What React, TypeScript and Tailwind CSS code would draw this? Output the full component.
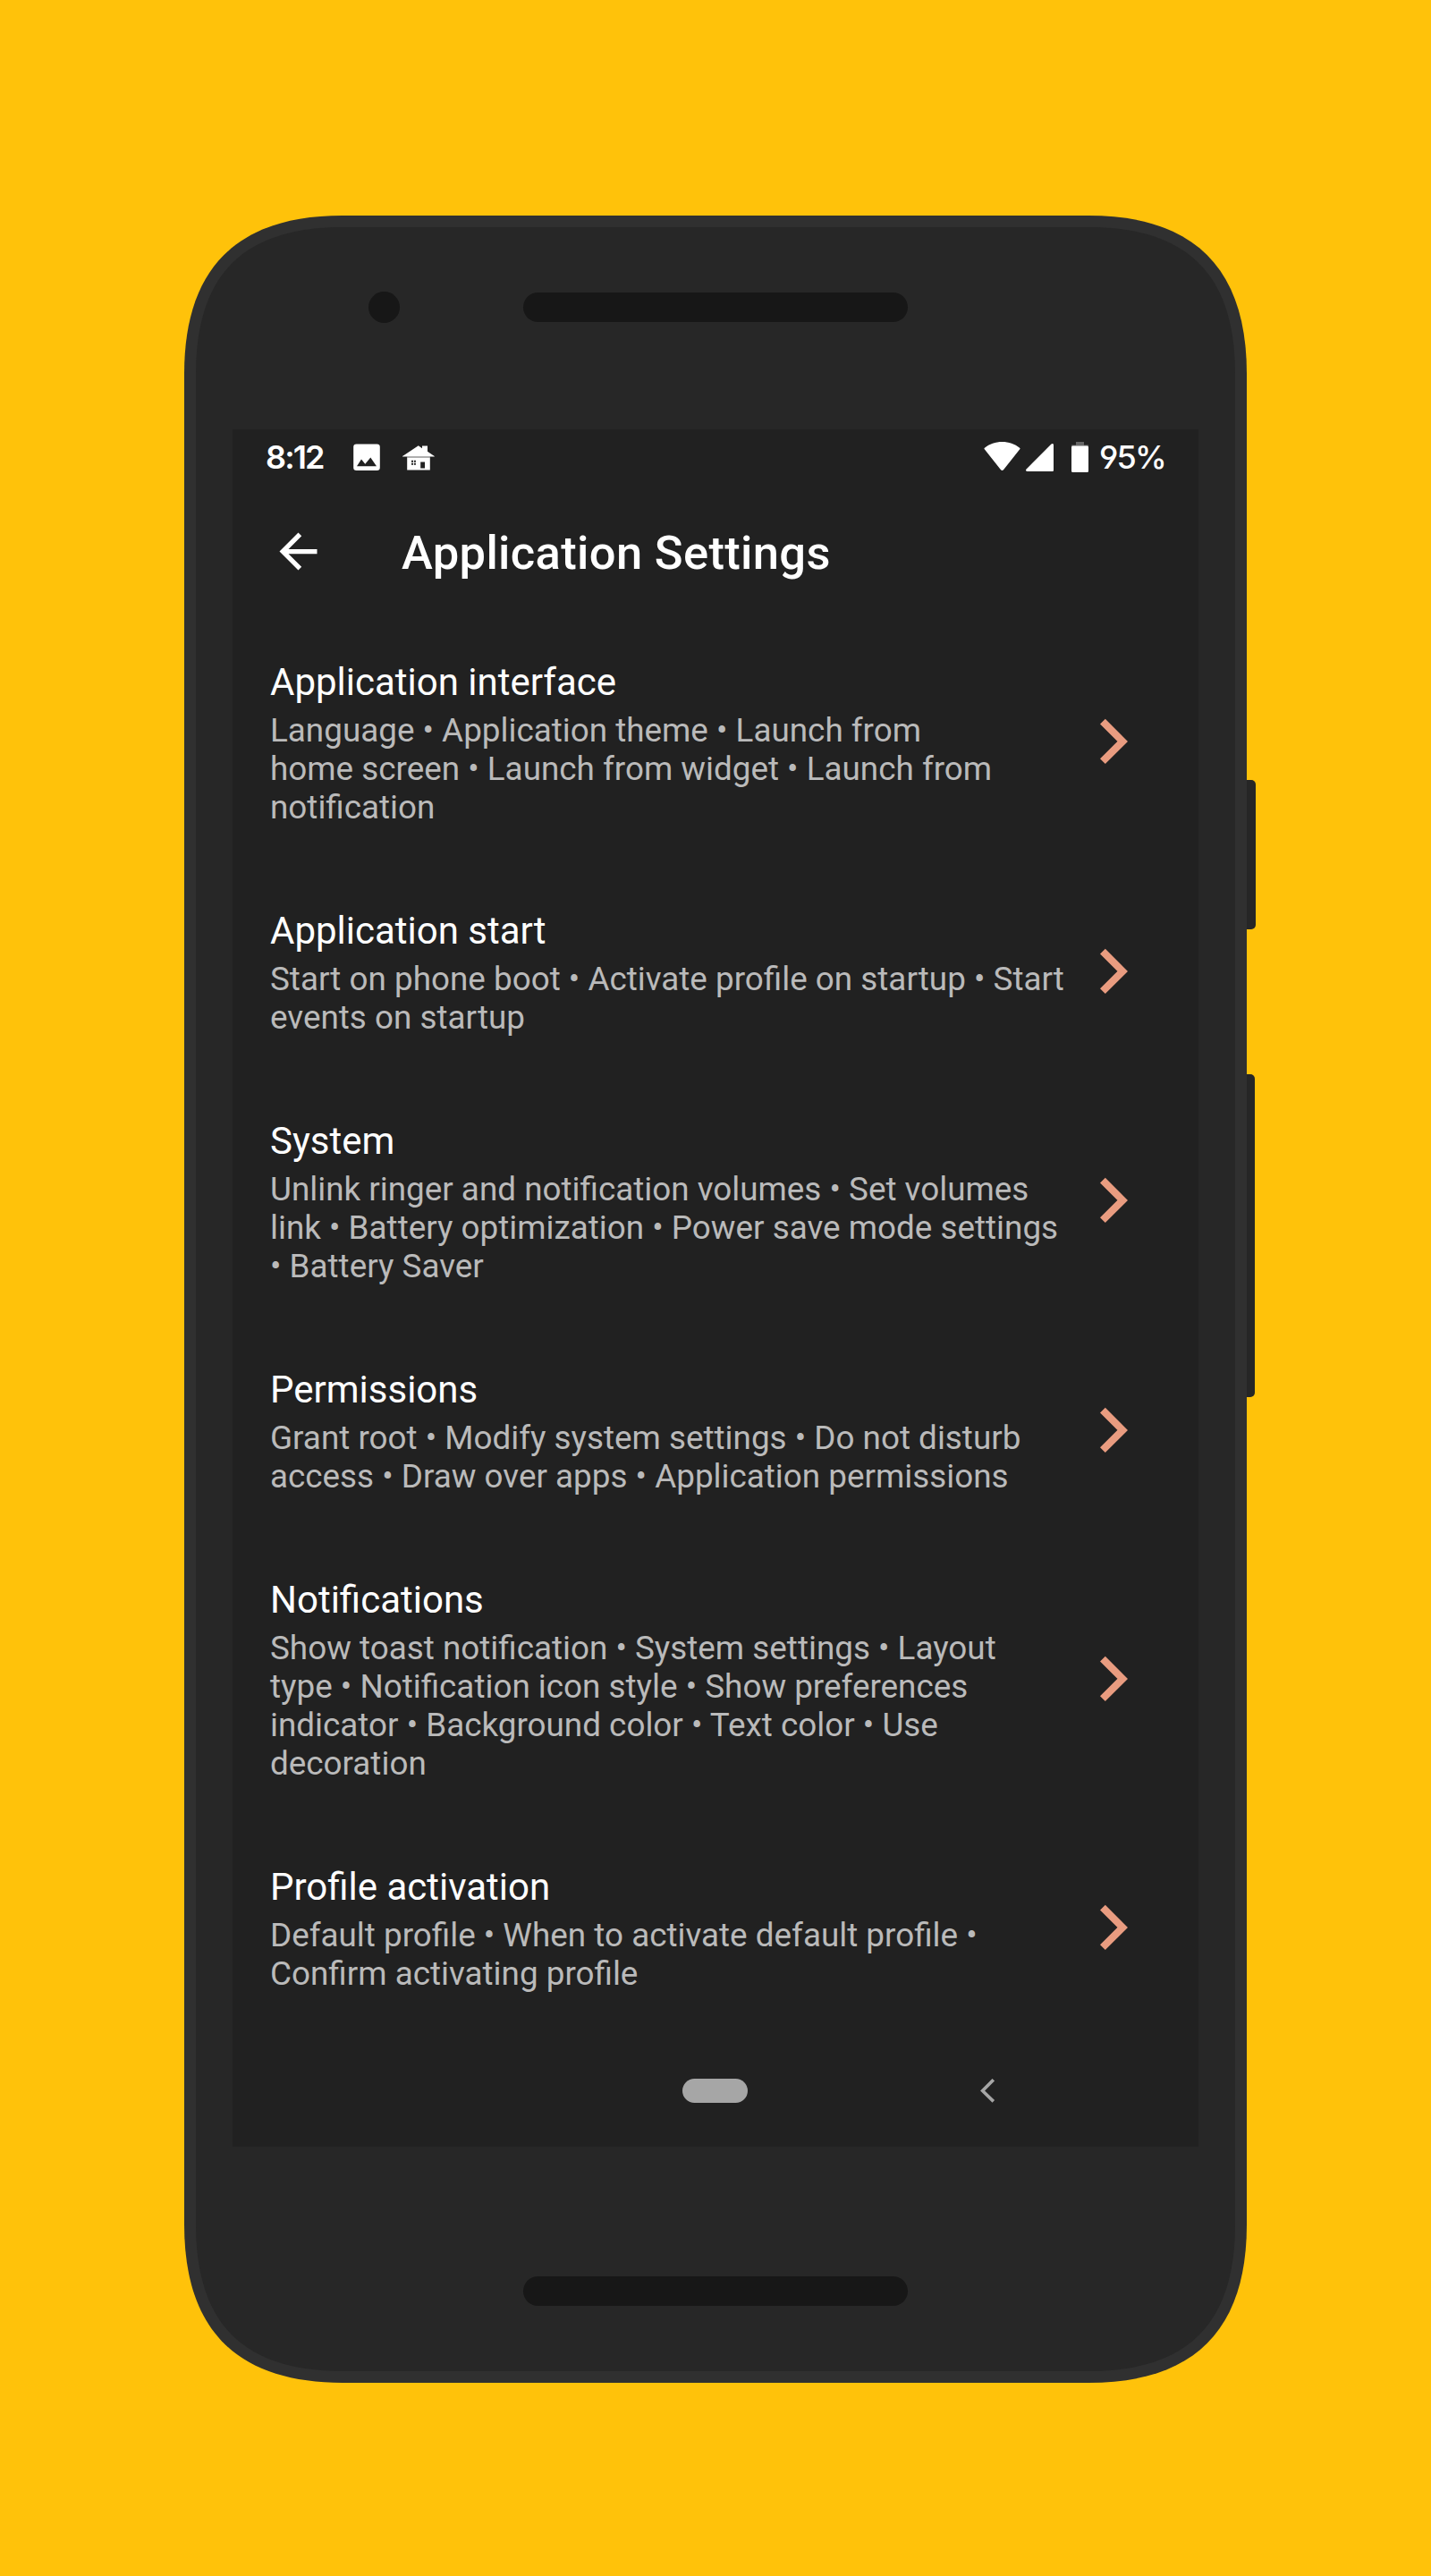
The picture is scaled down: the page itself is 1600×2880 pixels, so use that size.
import React from "react";

type Setting = { title: string; lines: string[] };

const settings: Setting[] = [
  {
    title: "Application interface",
    lines: [
      "Language • Application theme • Launch from",
      "home screen • Launch from widget • Launch from",
      "notification",
    ],
  },
  {
    title: "Application start",
    lines: ["Start on phone boot • Activate profile on startup • Start", "events on startup"],
  },
  {
    title: "System",
    lines: [
      "Unlink ringer and notification volumes • Set volumes",
      "link • Battery optimization • Power save mode settings",
      "• Battery Saver",
    ],
  },
  {
    title: "Permissions",
    lines: [
      "Grant root • Modify system settings • Do not disturb",
      "access • Draw over apps • Application permissions",
    ],
  },
  {
    title: "Notifications",
    lines: [
      "Show toast notification • System settings • Layout",
      "type • Notification icon style • Show preferences",
      "indicator • Background color • Text color • Use",
      "decoration",
    ],
  },
  {
    title: "Profile activation",
    lines: ["Default profile • When to activate default profile •", "Confirm activating profile"],
  },
];

/* Handset body: outer rim, inner face and side keys. */
function PhoneBody() {
  return (
    <svg className="absolute top-0 left-0" width="1200" height="2423" viewBox="0 0 1200 2423">
      <rect x="1170" y="631" width="28" height="167" rx="5" fill="#262626" />
      <rect x="1170" y="960" width="27" height="361" rx="5" fill="#262626" />
      <path
        fill="#303030"
        d="M177 0H1011C1129 0 1188 59 1188 177V2246C1188 2364 1129 2423 1011 2423H177C59 2423 0 2364 0 2246V177C0 59 59 0 177 0Z"
      />
      <path
        fill="#272727"
        d="M177 13H1011C1122 13 1175 66 1175 177V2246C1175 2357 1122 2410 1011 2410H177C66 2410 13 2357 13 2246V177C13 66 66 13 177 13Z"
      />
    </svg>
  );
}

function StatusBar() {
  return (
    <div className="flex h-[66px] items-start pt-[14px] pr-[37px] pl-[37px] text-white">
      <span className="mt-[1px] w-[98px] font-['Inter',sans-serif] text-[36px] leading-[32px] font-semibold tracking-[-1.9px] whitespace-nowrap">
        8:12
      </span>
      <svg className="mt-[2px]" width="30" height="31" viewBox="0 0 30 31">
        <path
          fill="#fff"
          fillRule="evenodd"
          d="M3.5 .5h23a3.3 3.3 0 0 1 3.3 3.3v23a3.3 3.3 0 0 1-3.3 3.3h-23a3.3 3.3 0 0 1-3.3-3.3v-23A3.3 3.3 0 0 1 3.5 .5zM4 25.2H26L19.3 15.6l-6 7.2-4.3-5.2z"
        />
      </svg>
      <svg className="mt-[4px] ml-[25px]" width="36" height="28" viewBox="0 0 36 28">
        <path
          fill="#fff"
          fillRule="evenodd"
          d="M0 12.1L17.8 .3 22 3.2V.6h6v6.2l7.8 5.3v.5H0zM5.2 13.4h25.6v14H5.2zM20.2 18.6v7h4.8v-7z"
        />
        <path fill="#cfcfcf" d="M5.2 12.5h25.6v1H5.2z" />
        <path fill="#222" d="M10 16.8h2v2h-2zM12.9 16.8h2v2h-2zM10 19.7h2v2h-2zM12.9 19.7h2v2h-2z" />
      </svg>
      <div className="ml-auto flex items-start">
        <svg width="41" height="33" viewBox="0 0 41 33">
          <path
            fill="#fff"
            d="M.9 6.7C6.3 2.4 13 0 20.5 0S34.7 2.4 40.1 6.7c.6.5.6 1 .1 1.6L22 31.2c-.9 1.1-2.1 1.1-3 0L.8 8.3C.3 7.7.3 7.2.9 6.7z"
          />
        </svg>
        <svg className="mt-[2px] ml-[6px]" width="31" height="31" viewBox="0 0 31 31">
          <path fill="#fff" d="M28.2 .8C29.6 -.5 31 0 31 1.8V29.8q0 1.2-1.2 1.2H1.6C-.2 31-.5 29.6.8 28.2z" />
        </svg>
        <svg className="ml-[20px]" width="19" height="34" viewBox="0 0 19 34">
          <path fill="#666" d="M5 0h9v3.5h5V6H0V3.5h5z" />
          <rect y="4.5" width="19" height="29.5" rx="1.5" fill="#fff" />
        </svg>
        <span className="mt-[1px] ml-[12px] w-[74px] font-['Inter',sans-serif] text-[36px] leading-[32px] font-medium tracking-[-1.8px] whitespace-nowrap [font-feature-settings:'cv04']">
          95%
        </span>
      </div>
    </div>
  );
}

function Header() {
  return (
    <div className="flex h-[144px] items-start pl-[42px] text-white">
      <svg className="mt-[39px]" width="63" height="63" viewBox="0 0 24 24">
        <path fill="#fff" d="M20 11H7.83l5.59-5.59L12 4l-8 8 8 8 1.41-1.41L7.83 13H20v-2z" />
      </svg>
      <h1 className="mt-[41px] ml-[84px] text-[52.5px] leading-[62px] font-medium tracking-[0.34px] whitespace-nowrap">
        Application Settings
      </h1>
    </div>
  );
}

function SettingRow({ title, lines }: Setting) {
  return (
    <div className="flex items-center justify-between pr-[79px] pl-[42px]">
      <div className="pt-[48px] pb-[44px] whitespace-nowrap">
        <h2 className="text-[42px] leading-[49px] text-white">{title}</h2>
        <p className="mt-[8px] text-[36.85px] leading-[43px] text-[#bababa]">
          {lines.map((line) => (
            <span key={line} className="block">
              {line}
            </span>
          ))}
        </p>
      </div>
      <svg className="shrink-0" width="31" height="52" viewBox="0 0 31 52">
        <path d="M2.9 3.6L25.2 25.9L2.9 48.2" fill="none" stroke="#e99c80" strokeWidth="8.2" />
      </svg>
    </div>
  );
}

function NavBar() {
  return (
    <div className="mt-auto flex h-[126px] items-start pt-[50px] pl-[503px]">
      <div className="h-[27px] w-[73px] shrink-0 rounded-full bg-[#a6a6a6]" />
      <svg className="ml-[260px] shrink-0" width="17" height="28" viewBox="0 0 17 28">
        <path d="M14.8 1.2L2.6 13.5L14.8 25.4" fill="none" stroke="#a6a6a6" strokeWidth="3.6" />
      </svg>
    </div>
  );
}

export default function App() {
  return (
    <div className="h-[2880px] w-[1600px] overflow-hidden bg-[#ffc20a] pt-[241px] font-['Roboto',sans-serif]">
      <div className="relative mx-auto h-[2423px] w-[1188px]">
        <PhoneBody />
        <div className="relative flex h-full flex-col items-center">
          <div className="flex h-[239px] w-full shrink-0 items-start pt-[85px]">
            <div className="ml-[206px] h-[35px] w-[35px] rounded-full bg-[#171717]" />
            <div className="mt-[1px] ml-[138px] h-[33px] w-[430px] rounded-full bg-[#171717]" />
          </div>
          <div className="flex h-[1920px] w-[1080px] shrink-0 flex-col bg-[#212121]">
            <StatusBar />
            <Header />
            <div>
              {settings.map((s) => (
                <SettingRow key={s.title} title={s.title} lines={s.lines} />
              ))}
            </div>
            <NavBar />
          </div>
          <div className="mt-[145px] h-[33px] w-[430px] rounded-full bg-[#171717]" />
        </div>
      </div>
    </div>
  );
}
